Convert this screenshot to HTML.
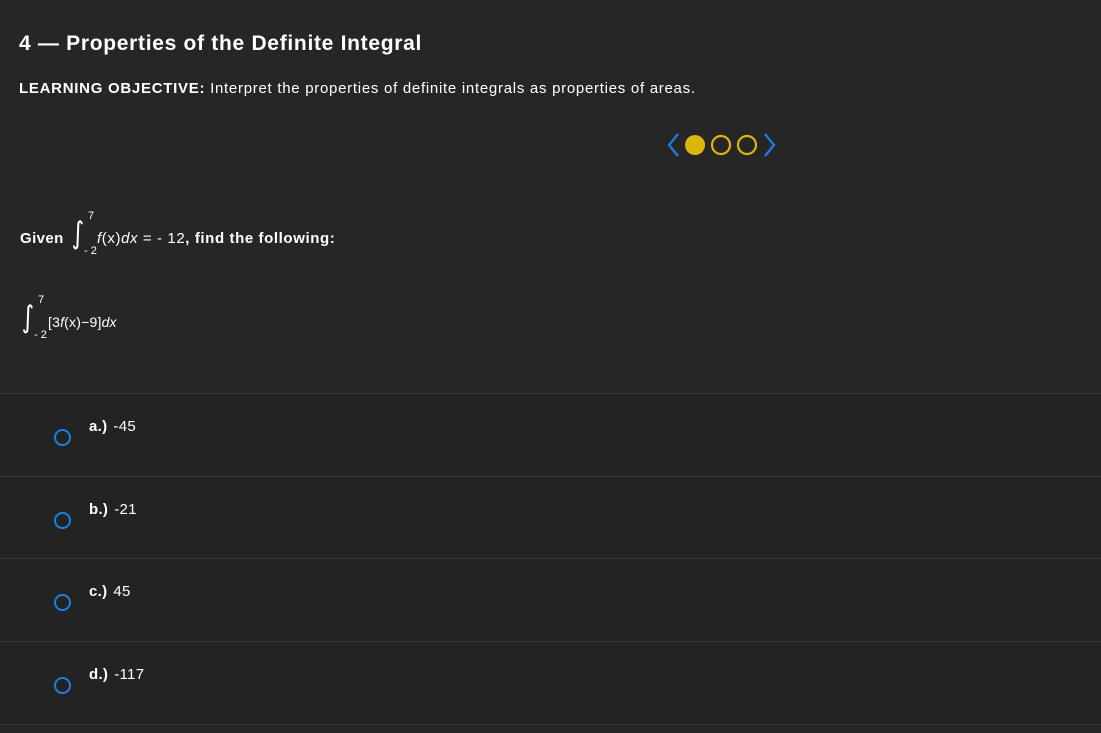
<!DOCTYPE html><html><head><style>
body{margin:0;width:1101px;height:733px;background:#262626;color:#fff;font-family:"Liberation Sans",sans-serif;overflow:hidden;position:relative}
.a{position:absolute;white-space:nowrap}
.row{position:absolute;left:0;width:1101px;height:82px;border-top:1px solid #363636;background:#232323}
.rad{position:absolute;left:54px;width:13px;height:13px;border:2px solid #1a80e6;border-radius:50%}
.lbl{position:absolute;left:89px;font-size:15px;letter-spacing:0.3px}
.lbl b{margin-right:6px}
.sm{font-size:11px}
.it{font-style:italic}
.int{font-family:"DejaVu Sans",sans-serif;font-size:30px;font-weight:normal;transform:scaleX(0.8)}
</style></head><body>
<div class="a" style="left:19px;top:32px;font-size:21px;font-weight:bold;letter-spacing:0.7px">4 — Properties of the Definite Integral</div>
<div class="a" style="left:19px;top:80px;font-size:15px;letter-spacing:0.72px"><b>LEARNING OBJECTIVE:</b> Interpret the properties of definite integrals as properties of areas.</div>
<svg class="a" style="left:660px;top:128px" width="120" height="36">
<path d="M18 6 L9 17 L18 28" stroke="#1a80e6" stroke-width="2.2" fill="none"/>
<circle cx="35" cy="17" r="10" fill="#dbb60b"/>
<circle cx="61" cy="17" r="9" stroke="#dbb60b" stroke-width="2.2" fill="none"/>
<circle cx="87" cy="17" r="9" stroke="#dbb60b" stroke-width="2.2" fill="none"/>
<path d="M105 6 L114 17 L105 28" stroke="#1a80e6" stroke-width="2.2" fill="none"/>
</svg>
<div class="a" style="left:20px;top:230px;font-size:15px;font-weight:bold;letter-spacing:0.4px">Given</div>
<div class="a int" style="left:70px;top:216px">∫</div>
<div class="a sm" style="left:88px;top:210px">7</div>
<div class="a sm" style="left:84px;top:245px">- 2</div>
<div class="a" style="left:97px;top:230px;font-size:15px;letter-spacing:0.6px"><span class="it">f</span>(x)<span class="it">dx</span> = - 12<b>, find the following:</b></div>
<div class="a int" style="left:20px;top:300px">∫</div>
<div class="a sm" style="left:38px;top:294px">7</div>
<div class="a sm" style="left:34px;top:329px">- 2</div>
<div class="a" style="left:48px;top:314px;font-size:14px;letter-spacing:0.2px">[3<span class="it">f</span>(x)−9]<span class="it">dx</span></div>
<div class="row" style="top:393px"><div class="rad" style="top:35px"></div><div class="lbl" style="top:24px"><b>a.)</b>-45</div></div>
<div class="row" style="top:476px"><div class="rad" style="top:35px"></div><div class="lbl" style="top:24px"><b>b.)</b>-21</div></div>
<div class="row" style="top:558px"><div class="rad" style="top:35px"></div><div class="lbl" style="top:24px"><b>c.)</b>45</div></div>
<div class="row" style="top:641px;border-bottom:1px solid #363636"><div class="rad" style="top:35px"></div><div class="lbl" style="top:24px"><b>d.)</b>-117</div></div>
</body></html>
